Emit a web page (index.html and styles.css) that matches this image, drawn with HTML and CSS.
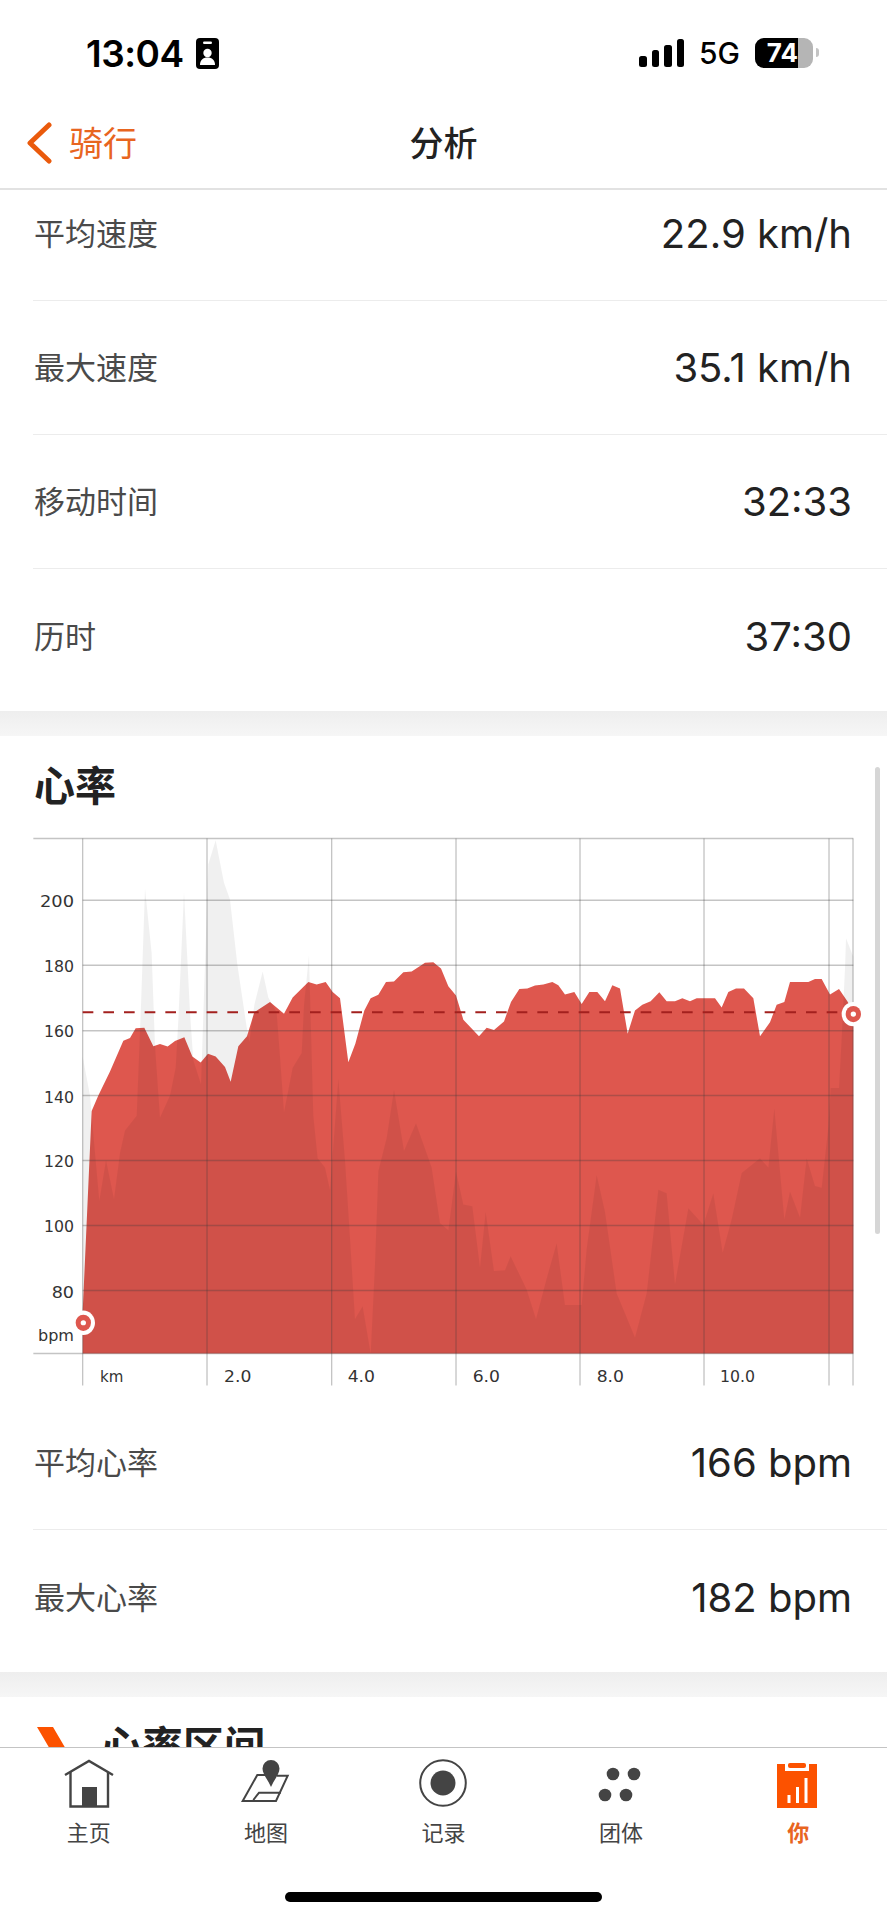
FILE: index.html
```html
<!DOCTYPE html>
<html lang="zh">
<head>
    <meta charset="UTF-8">
    <meta name="viewport" content="width=device-width, initial-scale=1.0">
    <title>分析</title>
    <link rel="stylesheet" href="styles.css">
</head>
<body>
    <div class="phone">
        <div class="status-bar">
            <div class="status-left">
                <span class="time">13:04</span>
                <svg class="badge" width="23" height="31" viewBox="0 0 23 31">
                    <rect width="23" height="31" rx="4" fill="#000"/>
                    <rect x="7" y="3.5" width="9" height="2.5" rx="1.2" fill="#fff"/>
                    <circle cx="11.5" cy="15" r="4.2" fill="#fff"/>
                    <path d="M4 27c0-5 3-7.500 7.500-7.500S19 22 19 27z" fill="#fff"/>
                </svg>
            </div>
            <div class="status-right">
                <div class="signal">
                    <i class="bar-1"></i><i class="bar-2"></i><i class="bar-3"></i><i class="bar-4"></i>
                </div>
                <span class="net">5G</span>
                <div class="battery"><div class="battery-level">74</div></div>
                <div class="battery-nub"></div>
            </div>
        </div>

        <div class="nav">
            <div class="nav-back">
                <svg width="26" height="42" viewBox="0 0 26 42">
                    <path d="M23 3 L4 21 L23 39" fill="none" stroke="#ea5a0c" stroke-width="5" stroke-linecap="round" stroke-linejoin="round"/>
                </svg>
                <span>骑行</span>
            </div>
            <div class="nav-title">分析</div>
        </div>

        <div class="content">
            <section class="card card-first">
                <div class="row"><span class="row-label">平均速度</span><span class="row-value">22.9 km/h</span></div>
                <div class="row"><span class="row-label">最大速度</span><span class="row-value">35.1 km/h</span></div>
                <div class="row"><span class="row-label">移动时间</span><span class="row-value">32:33</span></div>
                <div class="row"><span class="row-label">历时</span><span class="row-value">37:30</span></div>
            </section>

            <section class="card">
                <h2 class="card-title">心率</h2>
                <svg class="chart" viewBox="0 0 2661 1550" preserveAspectRatio="none">
                    <!-- heart rate -->
                    <polygon fill="#de574e" points="248,1443 248,1330 275,787 295,745 330,680 370,597 390,590 407,563 433,562 460,612 480,606 503,613 525,598 553,588 577,640 602,656 624,632 647,640 675,668 692,708 715,612 741,585 763,520 810,492 852,524 878,480 925,438 950,445 977,438 998,465 1020,482 1045,655 1066,605 1093,515 1112,482 1135,473 1158,438 1182,437 1210,412 1235,410 1275,386 1300,385 1323,402 1345,450 1368,475 1390,540 1437,585 1460,562 1482,568 1512,545 1533,492 1558,457 1582,456 1605,448 1630,445 1657,438 1675,447 1695,472 1723,465 1745,498 1768,465 1792,465 1815,490 1837,447 1860,456 1883,578 1905,515 1927,500 1952,490 1978,466 2000,490 2025,490 2047,482 2070,490 2090,482 2145,482 2165,507 2185,465 2208,456 2232,456 2260,482 2280,585 2310,547 2330,500 2353,492 2370,438 2425,438 2445,430 2465,430 2490,472 2517,457 2542,490 2560,520 2560,1443"/>
                    <!-- speed, drawn over the heart rate -->
                    <polygon fill="#000" fill-opacity="0.06" points="248,1443 248,640 270,745 285,900 298,1030 318,920 342,1025 360,900 375,840 410,800 423,500 435,185 455,360 465,610 480,805 510,745 527,670 535,540 552,195 570,520 580,650 603,715 625,120 647,55 672,170 690,215 712,390 740,560 748,600 763,500 788,410 805,480 830,520 840,640 852,790 878,670 905,630 912,500 927,365 940,800 953,915 975,940 990,1000 1015,700 1035,920 1050,1130 1065,1350 1088,1315 1112,1443 1125,1200 1135,950 1160,860 1182,730 1212,895 1248,820 1295,940 1320,1090 1345,1110 1368,950 1390,1040 1417,1045 1440,1210 1457,1060 1482,1220 1515,1218 1532,1180 1580,1270 1608,1350 1640,1240 1670,1145 1695,1312 1745,1312 1760,1160 1790,960 1815,1060 1850,1280 1905,1400 1940,1280 1975,1000 2000,1010 2025,1255 2065,1050 2110,1095 2140,1010 2168,1170 2195,1080 2225,955 2280,915 2305,940 2323,780 2353,1080 2370,1005 2400,1075 2420,915 2445,990 2465,995 2485,830 2492,725 2517,725 2525,590 2535,400 2538,320 2560,370 2560,1443"/>

                    <g class="grid">
                        <line x1="100" y1="50" x2="2560" y2="50"/>
                        <line x1="248" y1="217" x2="2560" y2="217"/>
                        <line x1="248" y1="393" x2="2560" y2="393"/>
                        <line x1="248" y1="570" x2="2560" y2="570"/>
                        <line x1="248" y1="745" x2="2560" y2="745"/>
                        <line x1="248" y1="921" x2="2560" y2="921"/>
                        <line x1="248" y1="1097" x2="2560" y2="1097"/>
                        <line x1="248" y1="1273" x2="2560" y2="1273"/>
                        <line x1="100" y1="1443" x2="2560" y2="1443"/>
                        <line x1="248" y1="50" x2="248" y2="1530"/>
                        <line x1="621" y1="50" x2="621" y2="1530"/>
                        <line x1="995" y1="50" x2="995" y2="1530"/>
                        <line x1="1368" y1="50" x2="1368" y2="1530"/>
                        <line x1="1740" y1="50" x2="1740" y2="1530"/>
                        <line x1="2112" y1="50" x2="2112" y2="1530"/>
                        <line x1="2487" y1="50" x2="2487" y2="1530"/>
                        <line x1="2559" y1="50" x2="2559" y2="1530"/>
                    </g>
                    <line class="avg-line" x1="248" y1="520" x2="2530" y2="520"/>

                    <g class="marker">
                        <ellipse cx="250" cy="1360" rx="35" ry="33" fill="#fff"/>
                        <ellipse cx="250" cy="1360" rx="23" ry="22" fill="#de574e"/>
                        <ellipse cx="250" cy="1360" rx="8" ry="7" fill="#fff"/>
                        <ellipse cx="2560" cy="525" rx="35" ry="33" fill="#fff"/>
                        <ellipse cx="2560" cy="525" rx="23" ry="22" fill="#de574e"/>
                        <ellipse cx="2560" cy="525" rx="8" ry="7" fill="#fff"/>
                    </g>

                    <g class="axis-y">
                        <text x="222" y="235" textLength="102" lengthAdjust="spacingAndGlyphs">200</text>
                        <text x="222" y="412" textLength="90" lengthAdjust="spacingAndGlyphs">180</text>
                        <text x="222" y="588" textLength="90" lengthAdjust="spacingAndGlyphs">160</text>
                        <text x="222" y="765" textLength="90" lengthAdjust="spacingAndGlyphs">140</text>
                        <text x="222" y="940" textLength="90" lengthAdjust="spacingAndGlyphs">120</text>
                        <text x="222" y="1115" textLength="90" lengthAdjust="spacingAndGlyphs">100</text>
                        <text x="222" y="1292" textLength="67" lengthAdjust="spacingAndGlyphs">80</text>
                        <text x="222" y="1410" textLength="108" lengthAdjust="spacingAndGlyphs">bpm</text>
                    </g>
                    <g class="axis-x">
                        <text x="300" y="1520" textLength="70" lengthAdjust="spacingAndGlyphs">km</text>
                        <text x="672" y="1520" textLength="82" lengthAdjust="spacingAndGlyphs">2.0</text>
                        <text x="1043" y="1520" textLength="82" lengthAdjust="spacingAndGlyphs">4.0</text>
                        <text x="1418" y="1520" textLength="82" lengthAdjust="spacingAndGlyphs">6.0</text>
                        <text x="1790" y="1520" textLength="82" lengthAdjust="spacingAndGlyphs">8.0</text>
                        <text x="2160" y="1520" textLength="105" lengthAdjust="spacingAndGlyphs">10.0</text>
                    </g>
                </svg>
                <div class="row"><span class="row-label">平均心率</span><span class="row-value">166 bpm</span></div>
                <div class="row"><span class="row-label">最大心率</span><span class="row-value">182 bpm</span></div>
            </section>

            <section class="card">
                <div class="zones-head">
                    <svg width="34" height="58" viewBox="0 0 34 58">
                        <path d="M0 0H16L33 29L16 58H0L17 29z" fill="#fc5200"/>
                    </svg>
                    <h2 class="card-title">心率区间</h2>
                </div>
            </section>

            <div class="scrollbar"></div>
        </div>

        <div class="tabbar">
            <div class="tabs">
                <div class="tab">
                    <svg width="50" height="50" viewBox="0 0 50 50">
                        <path d="M1 17 L25 3 L49 17" fill="none" stroke="#444" stroke-width="2.400"/>
                        <path d="M6.500 14 V48.500 H44 V14" fill="none" stroke="#444" stroke-width="2.400"/>
                        <rect x="18" y="29" width="15" height="20" fill="#444"/>
                    </svg>
                    <span>主页</span>
                </div>
                <div class="tab">
                    <svg width="50" height="50" viewBox="0 0 50 50">
                        <path d="M24 17 H16.300 L1.700 43 H35 L46.700 17.700 H36 M12.300 42 L18 34.700 H40" fill="none" stroke="#444" stroke-width="2"/>
                        <path d="M30 2 a8.500 8.500 0 0 1 8.500 8.500 C38.500 16 33 22 30 29 C27 22 21.500 16 21.500 10.500 A8.500 8.500 0 0 1 30 2z" fill="#444"/>
                    </svg>
                    <span>地图</span>
                </div>
                <div class="tab">
                    <svg width="50" height="50" viewBox="0 0 50 50">
                        <circle cx="25" cy="25" r="22.800" fill="none" stroke="#444" stroke-width="2"/>
                        <circle cx="25" cy="25" r="12.500" fill="#444"/>
                    </svg>
                    <span>记录</span>
                </div>
                <div class="tab">
                    <svg width="50" height="50" viewBox="0 0 50 50">
                        <circle cx="17" cy="16" r="6.300" fill="#444"/>
                        <circle cx="38" cy="16" r="6.300" fill="#444"/>
                        <circle cx="9" cy="37" r="6.300" fill="#444"/>
                        <circle cx="30" cy="37" r="6.300" fill="#444"/>
                    </svg>
                    <span>团体</span>
                </div>
                <div class="tab tab-active">
                    <svg width="50" height="50" viewBox="0 0 50 50">
                        <path d="M4 6 H12 V13 H36 V6 H44 V50 H4z" fill="#fc5200"/>
                        <rect x="15" y="5" width="18" height="5" rx="2" fill="#fc5200"/>
                        <rect x="14.500" y="37" width="3" height="8" fill="#fff"/>
                        <rect x="23" y="29" width="3" height="16" fill="#fff"/>
                        <rect x="31.500" y="20" width="3" height="25" fill="#fff"/>
                    </svg>
                    <span>你</span>
                </div>
            </div>
            <div class="home-bar"></div>
        </div>
    </div>
</body>
</html>
```

FILE: styles.css
```css
* {
    box-sizing: border-box;
}
body {
    margin: 0;
    background: #fff;
    font-family: Inter, "Noto Sans CJK SC", sans-serif;
    color: #222;
}
.phone {
    width: 887px;
    height: 1920px;
    display: flex;
    flex-direction: column;
    overflow: hidden;
}

/* status bar */
.status-bar {
    height: 106px;
    flex: none;
    display: flex;
    justify-content: space-between;
    padding: 37px 68px 0 86px;
}
.status-left {
    display: flex;
    align-items: center;
    gap: 12px;
    height: 32px;
}
.time {
    font-size: 37px;
    font-weight: 600;
    color: #000;
    letter-spacing: -0.5px;
}
.status-right {
    display: flex;
    align-items: center;
    height: 31px;
}
.signal {
    display: flex;
    align-items: flex-end;
    gap: 5px;
    height: 29px;
    margin-right: 15px;
}
.signal i {
    display: block;
    width: 7.500px;
    background: #000;
    border-radius: 2.5px;
}
.bar-1 { height: 11px; }
.bar-2 { height: 17px; }
.bar-3 { height: 22px; }
.bar-4 { height: 28px; }
.net {
    font-size: 30px;
    font-weight: 500;
    color: #000;
    margin-right: 15px;
}
.battery {
    width: 58px;
    height: 30px;
    border-radius: 9px;
    background: #b5b5b5;
    overflow: hidden;
}
.battery-level {
    width: 43px;
    height: 30px;
    background: #000;
    color: #fff;
    font-size: 26px;
    font-weight: 700;
    line-height: 30px;
    text-align: right;
}
.battery-nub {
    width: 3px;
    height: 9px;
    margin-left: 3px;
    background: #c4c4c4;
    border-radius: 0 3px 3px 0;
}

/* nav */
.nav {
    height: 84px;
    flex: none;
    position: relative;
    display: flex;
    align-items: center;
    justify-content: center;
    border-bottom: 2px solid #e2e2e2;
    padding-bottom: 12px;
}
.nav-back {
    position: absolute;
    left: 26px;
    top: 16px;
    display: flex;
    align-items: center;
    gap: 17px;
    color: #e8651f;
    font-size: 34px;
    height: 42px;
}
.nav-back span {
    margin-bottom: 3px;
}
.nav-title {
    font-size: 34px;
    font-weight: 500;
    color: #222;
}

/* content */
.content {
    flex: 1;
    position: relative;
    overflow: hidden;
}
.card {
    background: #fff;
    padding-bottom: 8px;
    margin-bottom: 25px;
    position: relative;
}
.card::after {
    content: "";
    position: absolute;
    left: 0;
    right: 0;
    top: 100%;
    height: 25px;
    background: linear-gradient(#eeeeee, #f6f6f6);
}
.card-first {
    margin-top: -23px;
}
.row {
    height: 134px;
    margin-left: 33px;
    padding: 0 35px 0 1px;
    display: flex;
    align-items: center;
    justify-content: space-between;
    border-bottom: 1px solid #ececec;
}
.row:last-child {
    border-bottom: none;
}
.row-label {
    font-size: 31px;
    color: #4a4a4a;
    margin-bottom: 4px;
}
.row-value {
    font-size: 40px;
    color: #222;
}
.card-title {
    margin: 0;
    font-size: 41px;
    font-weight: 700;
    line-height: 50px;
    color: #222;
}
.card > .card-title {
    padding: 25px 0 9px 34px;
}
.chart {
    display: block;
    width: 887px;
    height: 573px;
    margin-bottom: 3px;
}
.grid line {
    stroke: #3c3c3c;
    stroke-opacity: 0.3;
    stroke-width: 4;
}
.avg-line {
    stroke: #a3201e;
    stroke-width: 5;
    stroke-dasharray: 32 30;
}
.axis-y text,
.axis-x text {
    font-family: "DejaVu Sans", sans-serif;
    font-size: 44px;
    fill: #333;
}
.axis-y text {
    text-anchor: end;
}
.zones-head {
    display: flex;
    align-items: flex-start;
    gap: 30px;
    padding: 30px 0 0 37px;
    height: 120px;
}
.zones-head h2 {
    margin-top: -6px;
}
.scrollbar {
    position: absolute;
    right: 7px;
    top: 577px;
    width: 5px;
    height: 467px;
    border-radius: 3px;
    background: #d6d6d6;
}

/* tabs */
.tabbar {
    height: 173px;
    flex: none;
    background: #fff;
    border-top: 1px solid #c4c4c4;
    display: flex;
    flex-direction: column;
    align-items: center;
    position: relative;
}
.tabs {
    width: 100%;
    display: grid;
    grid-template-columns: repeat(5, 1fr);
    padding-top: 10px;
}
.tab {
    display: flex;
    flex-direction: column;
    align-items: center;
    font-size: 22px;
    line-height: 26px;
    color: #444;
    gap: 12px;
}
.tab svg {
    overflow: visible;
}
.tab-active {
    color: #e8651f;
    font-weight: 700;
}
.home-bar {
    width: 317px;
    height: 10px;
    margin-top: 46px;
    border-radius: 5px;
    background: #000;
}
```
